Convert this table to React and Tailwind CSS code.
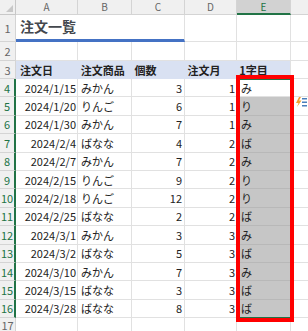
const rows = [
  { no: 4, date: "2024/1/15", item: "みかん", qty: 3, month: 1, head: "み" },
  { no: 5, date: "2024/1/20", item: "りんご", qty: 6, month: 1, head: "り" },
  { no: 6, date: "2024/1/30", item: "みかん", qty: 7, month: 1, head: "み" },
  { no: 7, date: "2024/2/4", item: "ばなな", qty: 4, month: 2, head: "ば" },
  { no: 8, date: "2024/2/7", item: "みかん", qty: 7, month: 2, head: "み" },
  { no: 9, date: "2024/2/15", item: "りんご", qty: 9, month: 2, head: "り" },
  { no: 10, date: "2024/2/18", item: "りんご", qty: 12, month: 2, head: "り" },
  { no: 11, date: "2024/2/25", item: "ばなな", qty: 2, month: 2, head: "ば" },
  { no: 12, date: "2024/3/1", item: "みかん", qty: 3, month: 3, head: "み" },
  { no: 13, date: "2024/3/2", item: "ばなな", qty: 5, month: 3, head: "ば" },
  { no: 14, date: "2024/3/10", item: "みかん", qty: 7, month: 3, head: "み" },
  { no: 15, date: "2024/3/15", item: "ばなな", qty: 3, month: 3, head: "ば" },
  { no: 16, date: "2024/3/28", item: "ばなな", qty: 8, month: 3, head: "ば" },
];

function RowNo({ children, active }) {
  return (
    <div
      className={`w-[16px] shrink-0 flex items-center justify-center bg-[#f0f0f0] border-b border-[#d4d4d4] text-[11px] ${
        active
          ? "text-[#217346] border-r-2 border-r-[#217346]"
          : "text-[#666] border-r"
      }`}
    >
      {children}
    </div>
  );
}

function FlashFillIcon() {
  return (
    <svg width="12" height="10" viewBox="0 0 12 10">
      <path d="M4 0 L1 6 L3.5 6 L2 10 L6.5 3.5 L4 3.5 L6 0 Z" fill="#f0a030" />
      <rect x="7" y="1" width="5" height="1.5" fill="#4a7ebb" />
      <rect x="7" y="4.5" width="5" height="1.5" fill="#4a7ebb" />
      <rect x="7" y="8" width="5" height="1.5" fill="#4a7ebb" />
    </svg>
  );
}

export default function App() {
  return (
    <div className="relative w-[308px] h-[331px] overflow-hidden bg-white font-['Noto_Sans_CJK_JP',sans-serif] text-[11px] leading-[12px] text-[#222]">

      {/* column letters */}
      <div className="flex h-[15px] text-[10px]">
        <div className="relative w-[16px] shrink-0 bg-[#f0f0f0] border-r border-b border-[#c8c8c8]">
          <div className="absolute right-[2px] bottom-[2px] w-0 h-0 border-l-[7px] border-l-transparent border-b-[7px] border-b-[#c8c8c8]" />
        </div>
        <div className="w-[62px] shrink-0 flex items-center justify-center bg-[#f0f0f0] border-r border-b border-[#d4d4d4] text-[#666]">A</div>
        <div className="w-[54px] shrink-0 flex items-center justify-center bg-[#f0f0f0] border-r border-b border-[#d4d4d4] text-[#666]">B</div>
        <div className="w-[53px] shrink-0 flex items-center justify-center bg-[#f0f0f0] border-r border-b border-[#d4d4d4] text-[#666]">C</div>
        <div className="w-[52px] shrink-0 flex items-center justify-center bg-[#f0f0f0] border-r border-b border-[#d4d4d4] text-[#666]">D</div>
        <div className="w-[54px] shrink-0 flex items-center justify-center bg-[#d2d2d2] border-r border-[#d4d4d4] border-b-2 border-b-[#217346] text-[#217346]">E</div>
        <div className="flex-1 bg-[#f0f0f0] border-b border-[#d4d4d4]" />
      </div>

      {/* row 1: title */}
      <div className="flex h-[27px]">
        <RowNo>1</RowNo>
        <div className="w-[169px] shrink-0 flex items-end pl-[4px] pb-[5px] border-b-[3px] border-b-[#4472c4] border-r border-r-[#e1e1e1]">
          <span className="text-[14px] leading-[16px] font-bold text-[#44484e] whitespace-nowrap">注文一覧</span>
        </div>
        <div className="w-[52px] shrink-0 border-r border-b border-[#e1e1e1]" />
        <div className="w-[54px] shrink-0 border-r border-b border-[#e1e1e1]" />
        <div className="flex-1 border-b border-[#e1e1e1]" />
      </div>

      {/* row 2 */}
      <div className="flex h-[19px]">
        <RowNo>2</RowNo>
        <div className="w-[62px] shrink-0 border-r border-b border-[#e1e1e1]" />
        <div className="w-[54px] shrink-0 border-r border-b border-[#e1e1e1]" />
        <div className="w-[53px] shrink-0 border-r border-b border-[#e1e1e1]" />
        <div className="w-[52px] shrink-0 border-r border-b border-[#e1e1e1]" />
        <div className="w-[54px] shrink-0 border-r border-b border-[#e1e1e1]" />
        <div className="flex-1 border-b border-[#e1e1e1]" />
      </div>

      {/* row 3: headings */}
      <div className="flex h-[18px]">
        <RowNo>3</RowNo>
        <div className="w-[275px] shrink-0 flex items-center bg-[#d9e1f2] font-bold border-r border-[#e1e1e1]">
          <div className="w-[62px] pl-[4px]">注文日</div>
          <div className="w-[54px] pl-[3px]">注文商品</div>
          <div className="w-[53px] pl-[3px]">個数</div>
          <div className="w-[52px] pl-[3px]">注文月</div>
          <div className="w-[54px] pl-[3px]">1字目</div>
        </div>
        <div className="flex-1 border-b border-[#e1e1e1]" />
      </div>

      {/* data rows */}
      {rows.map((row, i) => (
        <div key={row.no} className="flex h-[18.4px]">
          <RowNo active>{row.no}</RowNo>
          <div className="w-[62px] shrink-0 flex items-center justify-end pr-[1px] border-r border-b border-[#e1e1e1]">
            {row.date}
          </div>
          <div className="w-[54px] shrink-0 flex items-center pl-[3px] border-r border-b border-[#e1e1e1]">
            {row.item}
          </div>
          <div className="w-[53px] shrink-0 flex items-center justify-end pr-[2px] border-r border-b border-[#e1e1e1]">
            {row.qty}
          </div>
          <div className="w-[52px] shrink-0 flex items-center justify-end pr-[1px] border-r border-b border-[#e1e1e1]">
            {row.month}
          </div>
          <div
            className={`w-[54px] shrink-0 flex items-center pl-[4px] border-r border-b ${
              i === 0
                ? "bg-white border-[#e1e1e1] border-t border-t-[#217346]"
                : "bg-[#c6c6c6] border-[#b8b8b8]"
            } ${i === rows.length - 1 ? "border-b-[#217346]" : ""}`}
          >
            {row.head}
          </div>
          <div className="flex-1 border-b border-[#e1e1e1]" />
        </div>
      ))}

      {/* row 17 */}
      <div className="flex h-[14px]">
        <RowNo>17</RowNo>
        <div className="w-[62px] shrink-0 border-r border-[#e1e1e1]" />
        <div className="w-[54px] shrink-0 border-r border-[#e1e1e1]" />
        <div className="w-[53px] shrink-0 border-r border-[#e1e1e1]" />
        <div className="w-[52px] shrink-0 border-r border-[#e1e1e1]" />
        <div className="w-[54px] shrink-0 border-r border-[#e1e1e1]" />
        <div className="flex-1" />
      </div>

      {/* red frame around column E */}
      <div className="absolute left-[236px] top-[75px] w-[58px] h-[247px] border-4 border-[#ff0000]" />

      {/* flash fill options */}
      <div className="absolute left-[295px] top-[97px]">
        <FlashFillIcon />
      </div>
    </div>
  );
}
